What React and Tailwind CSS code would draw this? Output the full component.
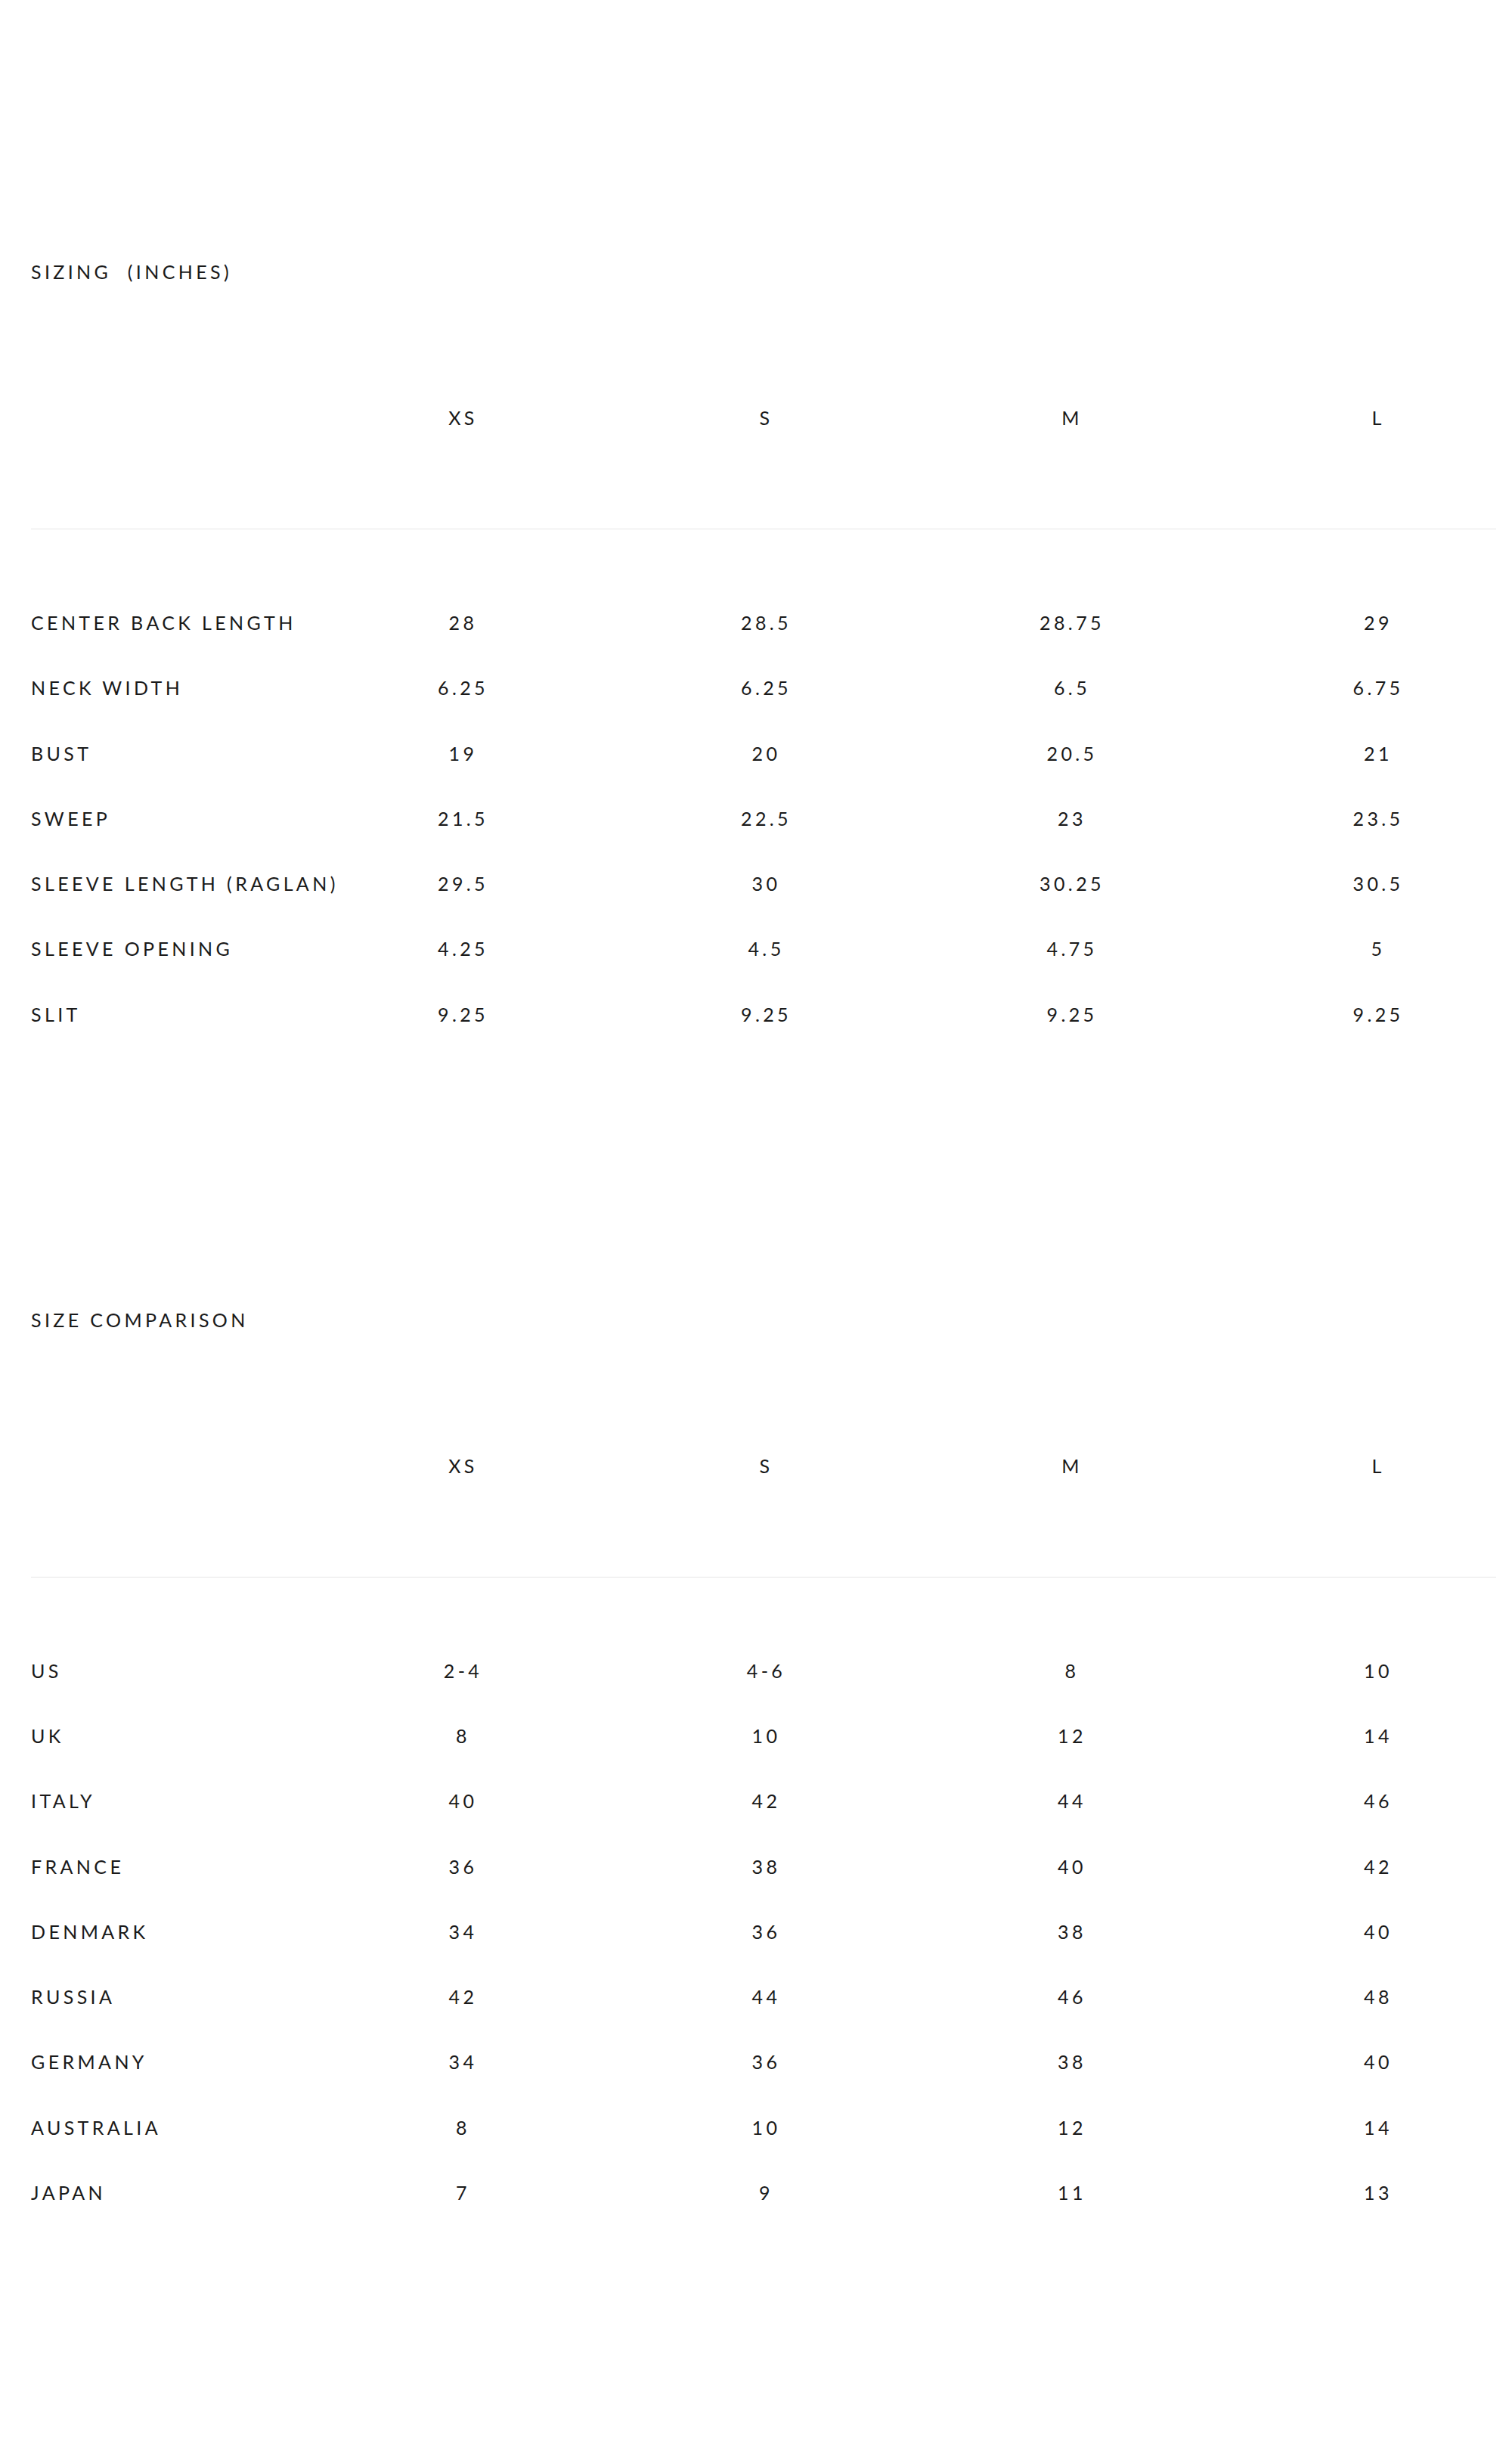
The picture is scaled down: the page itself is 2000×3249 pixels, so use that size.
const sizes = ["XS", "S", "M", "L"];

const sizing = [
  ["CENTER BACK LENGTH", "28", "28.5", "28.75", "29"],
  ["NECK WIDTH", "6.25", "6.25", "6.5", "6.75"],
  ["BUST", "19", "20", "20.5", "21"],
  ["SWEEP", "21.5", "22.5", "23", "23.5"],
  ["SLEEVE LENGTH (RAGLAN)", "29.5", "30", "30.25", "30.5"],
  ["SLEEVE OPENING", "4.25", "4.5", "4.75", "5"],
  ["SLIT", "9.25", "9.25", "9.25", "9.25"],
];

const comparison = [
  ["US", "2-4", "4-6", "8", "10"],
  ["UK", "8", "10", "12", "14"],
  ["ITALY", "40", "42", "44", "46"],
  ["FRANCE", "36", "38", "40", "42"],
  ["DENMARK", "34", "36", "38", "40"],
  ["RUSSIA", "42", "44", "46", "48"],
  ["GERMANY", "34", "36", "38", "40"],
  ["AUSTRALIA", "8", "10", "12", "14"],
  ["JAPAN", "7", "9", "11", "13"],
];

// label column + four size columns (last one takes the rest)
const cols = "grid grid-cols-[372px_399px_403px_406px_1fr]";

const Cells = ({ values }) =>
  values.map((v, i) => (
    <div key={i} className={i === 3 ? "text-center pl-[46px]" : "text-center"}>
      {v}
    </div>
  ));

const SizeTable = ({ title, rows }) => {
  return (
    <section>
      <h2 className="h-[30px] leading-[30px] text-[25px] font-normal whitespace-pre">
        {title}
      </h2>
      <div className={`${cols} mt-[163px] h-[30px] leading-[30px]`}>
        <div />
        <Cells values={sizes} />
      </div>
      <div className="mt-[132px] border-t border-[#e6e6e6]" />
      <div className="mt-[80px]">
        {rows.map((r) => (
          <div key={r[0]} className={`${cols} h-[86.25px] items-center`}>
            <div className="whitespace-nowrap">{r[0]}</div>
            <Cells values={r.slice(1)} />
          </div>
        ))}
      </div>
    </section>
  );
};

export default function App() {
  return (
    <div
      className="bg-white text-[#1a1a1a] text-[25px] leading-[30px] tracking-[0.175em] pl-[41px] pr-[21px] pt-[344px] pb-[307px] min-h-[3249px] overflow-hidden"
      style={{ fontFamily: "Lato, 'Liberation Sans', sans-serif" }}
    >
      <SizeTable title={"SIZING  (INCHES)"} rows={sizing} />
      <div className="mt-[346px]">
        <SizeTable title="SIZE COMPARISON" rows={comparison} />
      </div>
    </div>
  );
}
